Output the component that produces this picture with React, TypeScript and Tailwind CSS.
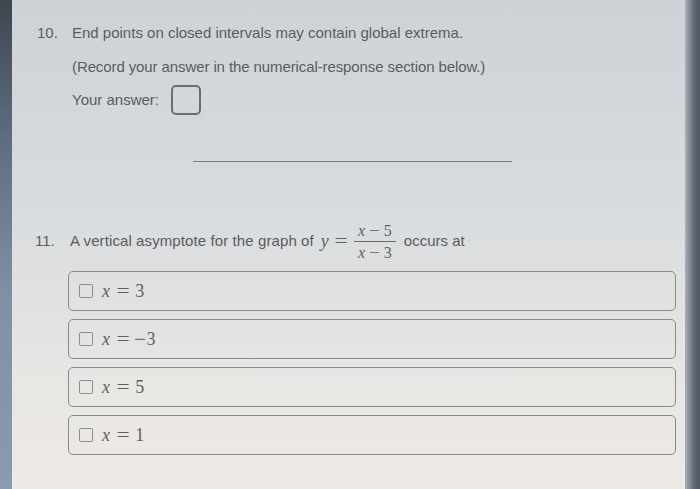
import React from "react";

function M({ children }: { children: React.ReactNode }) {
  return <span className="italic">{children}</span>;
}

function Rel({ children }: { children: React.ReactNode }) {
  return <span className="mx-[0.42em] inline-block scale-x-[1.3]">{children}</span>;
}

function Bin({ children }: { children: React.ReactNode }) {
  return <span className="mx-[0.3em] inline-block scale-x-[1.2]">{children}</span>;
}

function Option({ children }: { children: React.ReactNode }) {
  return (
    <div className="flex h-[40px] items-center rounded-[5px] border-[1.5px] border-[#8a8a8a] pl-[10px]">
      <span className="h-[14px] w-[14px] rounded-[2px] border-[1.5px] border-[#8e8e8e]" />
      <span
        className="ml-[9px] text-[18px] leading-none text-[#5e5f61]"
        style={{ fontFamily: '"Liberation Serif", serif' }}
      >
        {children}
      </span>
    </div>
  );
}

export default function App() {
  return (
    <div
      className="flex h-[489px] w-[700px] overflow-hidden bg-[linear-gradient(180deg,#ced2d7_0%,#d9dcde_45%,#e9e7e4_80%,#ece9e5_100%)] text-[#5a5c60]"
      style={{ fontFamily: '"Liberation Sans", Arial, sans-serif' }}
    >
      <div className="w-[12px] shrink-0 bg-[linear-gradient(180deg,#3e464f_0%,#5f6f82_30%,#7f90a3_60%,#8a9bb0_100%)]" />
      <div className="flex flex-1 flex-col pl-[23px] pr-[9px]">
        <div className="mt-[23px] flex text-[15px] leading-[20px]">
          <span className="w-[37px] shrink-0 pl-[2px]">10.</span>
          <span>End points on closed intervals may contain global extrema.</span>
        </div>
        <div className="mt-[14px] pl-[37px] text-[15px] leading-[20px] tracking-[-0.1px]">
          (Record your answer in the numerical-response section below.)
        </div>
        <div className="mt-[8px] flex h-[30px] items-center pl-[37px] text-[15px]">
          <span>Your answer:</span>
          <span className="ml-[12px] h-[30px] w-[30px] rounded-[5px] border-2 border-[#6c6e72]" />
        </div>
        <div className="ml-[158px] mt-[46px] h-px w-[319px] bg-[#7d7f82]" />
        <div className="mt-[57px] flex h-[44px] items-center text-[15px]">
          <span className="w-[35px] shrink-0">11.</span>
          <span className="tracking-[0.1px]">A vertical asymptote for the graph of</span>
          <span
            className="ml-[7px] flex items-center text-[18px] text-[#5e5f61]"
            style={{ fontFamily: '"Liberation Serif", serif' }}
          >
            <M>y</M>
            <Rel>=</Rel>
            <span className="inline-flex flex-col items-center text-[16px] leading-[21px]">
              <span className="px-[4px]">
                <M>x</M>
                <Bin>−</Bin>5
              </span>
              <span className="h-px w-full bg-[#6a6b6e]" />
              <span className="px-[4px]">
                <M>x</M>
                <Bin>−</Bin>3
              </span>
            </span>
          </span>
          <span className="ml-[8px]">occurs at</span>
        </div>
        <div className="mt-[8px] flex flex-col gap-[8px] pl-[33px]">
          <Option>
            <M>x</M>
            <Rel>=</Rel>3
          </Option>
          <Option>
            <M>x</M>
            <Rel>=</Rel>
            <span className="mr-[1px] inline-block scale-x-[1.2]">−</span>3
          </Option>
          <Option>
            <M>x</M>
            <Rel>=</Rel>5
          </Option>
          <Option>
            <M>x</M>
            <Rel>=</Rel>1
          </Option>
        </div>
      </div>
      <div className="w-[15px] shrink-0 bg-[linear-gradient(90deg,#aab1b9_0%,#5f6976_60%,#4e5763_100%)]" />
    </div>
  );
}
